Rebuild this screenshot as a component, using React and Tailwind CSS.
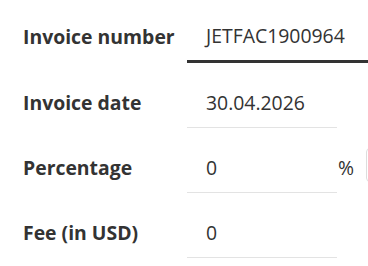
import React from "react";

const rows = [
  { label: "Invoice number", value: "JETFAC1900964", active: true },
  { label: "Invoice date", value: "30.04.2026" },
  { label: "Percentage", value: "0", suffix: "%" },
  { label: "Fee (in USD)", value: "0" },
];

export default function App() {
  return (
    <div
      className="w-[368px] h-[266px] overflow-hidden bg-white pt-[12px] pl-[23px] text-[#333]"
      style={{ fontFamily: '"Open Sans", sans-serif' }}
    >
      <div className="flex flex-col gap-[15px]">
        {rows.map((row) => (
          <div key={row.label} className="flex items-start">
            <div className="w-[164px] shrink-0 h-[50px] flex items-center text-[19.4px] font-bold">
              {row.label}
            </div>
            {row.active ? (
              <div className="w-[200px] shrink-0 h-[51px] flex items-center pl-[19px] border-b-[3px] border-[#333] text-[19.4px]">
                {row.value}
              </div>
            ) : (
              <div className="w-[150px] shrink-0 h-[50px] flex items-center pl-[19px] border-b border-[#e3e3e3] text-[19.4px]">
                {row.value}
              </div>
            )}
            {row.suffix && (
              <div className="flex items-center h-[50px] shrink-0">
                <span className="ml-px text-[19.4px]">{row.suffix}</span>
                <div className="ml-[12px] mt-[-7px] w-[60px] h-[34px] border border-[#ddd] rounded-[4px]" />
              </div>
            )}
          </div>
        ))}
      </div>
    </div>
  );
}
